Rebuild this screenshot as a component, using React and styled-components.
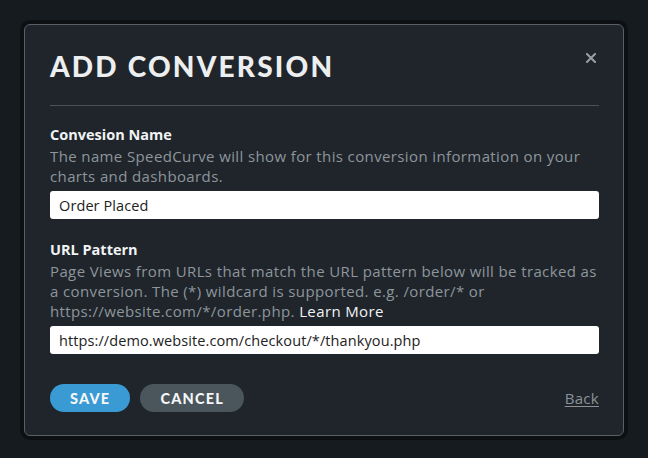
import React from 'react'
import styled, { createGlobalStyle } from 'styled-components'

const GlobalStyle = createGlobalStyle`
	html, body {
		margin: 0;
		padding: 0;
		background: #161b20;
	}
	body {
		font-family: "Open Sans", "Liberation Sans", sans-serif;
		-webkit-font-smoothing: antialiased;
	}
`

const Page = styled.div`
	width: 648px;
	height: 458px;
	box-sizing: border-box;
	padding: 24px 0 0 24px;
	background: #161b20;
`

const Modal = styled.div`
	width: 600px;
	height: 412px;
	box-sizing: border-box;
	padding: 24px 24px 0 25px;
	background: #1f252b;
	border: 1px solid #5a5f65;
	border-radius: 6px;
	box-shadow: 0 0 0 4px rgba(5, 7, 9, 0.55);
	display: flex;
	flex-direction: column;
`

const Header = styled.div`
	display: flex;
	justify-content: space-between;
	align-items: flex-start;
	padding-bottom: 22px;
	border-bottom: 1px solid #4c5156;
`

const Title = styled.h1`
	margin: 0;
	font-family: Lato, "Open Sans", sans-serif;
	font-size: 28px;
	line-height: 34px;
	font-weight: 900;
	letter-spacing: 2.2px;
	color: #eceeef;
`

const Close = styled.button`
	border: 0;
	background: none;
	padding: 0;
	margin: 4px 3px 0 0;
	width: 10px;
	height: 10px;
	display: flex;
	color: #9a9fa4;
	cursor: pointer;
`

const Field = styled.div`
	display: flex;
	flex-direction: column;
	margin-top: ${p => p.$top}px;
`

const Label = styled.label`
	font-size: 14.5px;
	line-height: 20px;
	font-weight: 700;
	color: #f1f3f4;
`

const Help = styled.p`
	margin: 1px 0 0;
	font-size: 15px;
	line-height: 20px;
	letter-spacing: 0.38px;
	color: #8e959b;
`

const HelpLink = styled.a`
	color: #f1f3f4;
	text-decoration: none;
`

const Input = styled.input`
	margin-top: 5px;
	height: 28px;
	box-sizing: border-box;
	border: 0;
	border-radius: 3px;
	padding: 0 9px;
	background: #fff;
	color: #222;
	font-family: inherit;
	font-size: 14.5px;
	letter-spacing: 0.1px;
	outline: none;
`

const Footer = styled.div`
	margin-top: 30px;
	display: flex;
	align-items: center;
	gap: 10px;
`

const Pill = styled.button`
	height: 28px;
	padding: 0 ${p => p.$pad}px;
	border: 0;
	border-radius: 14px;
	background: ${p => p.$bg};
	color: #f4f6f7;
	font-family: Lato, "Open Sans", sans-serif;
	font-size: 14.5px;
	font-weight: 900;
	letter-spacing: 1.2px;
	cursor: pointer;
`

const Back = styled.a`
	margin-left: auto;
	font-size: 15px;
	letter-spacing: 0.3px;
	color: #8b9196;
	text-decoration: underline;
	text-underline-offset: 2px;
`

const App = () => {
	return (
		<Page>
			<GlobalStyle />
			<Modal>
				<Header>
					<Title>ADD CONVERSION</Title>
					<Close aria-label="Close">
						<svg width="10" height="10" viewBox="0 0 10 10">
							<path d="M1 1L9 9M9 1L1 9" stroke="currentColor" strokeWidth="2" strokeLinecap="square" />
						</svg>
					</Close>
				</Header>

				<Field $top={19}>
					<Label>Convesion Name</Label>
					<Help>The name SpeedCurve will show for this conversion information on your charts and dashboards.</Help>
					<Input defaultValue="Order Placed" />
				</Field>

				<Field $top={21}>
					<Label>URL Pattern</Label>
					<Help>
						Page Views from URLs that match the URL pattern below will be tracked as a conversion. The (*) wildcard is supported. e.g. /order/* or https://website.com/*/order.php. <HelpLink href="#">Learn More</HelpLink>
					</Help>
					<Input defaultValue="https://demo.website.com/checkout/*/thankyou.php" />
				</Field>

				<Footer>
					<Pill $bg="#3a9ad4" $pad={20}>SAVE</Pill>
					<Pill $bg="#4a555c" $pad={20}>CANCEL</Pill>
					<Back href="#">Back</Back>
				</Footer>
			</Modal>
		</Page>
	)
}

export default App
